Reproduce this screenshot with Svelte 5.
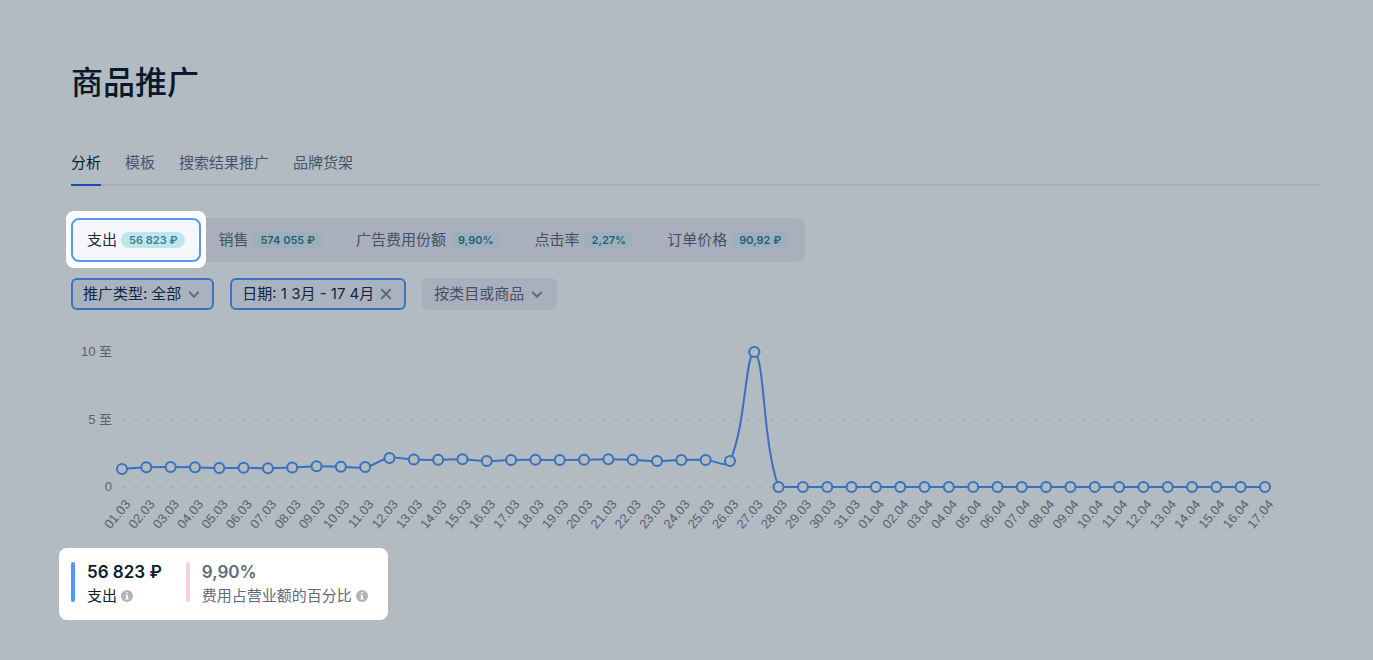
<script lang="ts">
	type Metric = {
		id: string;
		label: string;
		value: string;
	};

	type Point = { x: number; y: number };

	const tabs = ['分析', '模板', '搜索结果推广', '品牌货架'];

	const metrics: Metric[] = [
		{ id: 'spend', label: '支出', value: '56 823 ₽' },
		{ id: 'sales', label: '销售', value: '574 055 ₽' },
		{ id: 'share', label: '广告费用份额', value: '9,90%' },
		{ id: 'ctr', label: '点击率', value: '2,27%' },
		{ id: 'price', label: '订单价格', value: '90,92 ₽' }
	];

	const values = [
		1.33, 1.46, 1.48, 1.46, 1.4, 1.43, 1.38, 1.44, 1.53, 1.5, 1.48, 2.14, 2.03, 2.01, 2.05, 1.92,
		2.0, 2.01, 2.0, 2.01, 2.05, 2.01, 1.92, 2.0, 2.0, 1.92, 10, 0, 0, 0, 0, 0, 0, 0, 0, 0, 0, 0, 0,
		0, 0, 0, 0, 0, 0, 0, 0, 0
	];

	const ticks = [
		{ value: 10, label: '10 至' },
		{ value: 5, label: '5 至' },
		{ value: 0, label: '0' }
	];

	const MARCH_DAYS = 31;
	const CHART_HEIGHT = 210;
	const PLOT = { left: 51, right: 54, top: 26, bottom: 161 };
	const TENSION = 0.4;

	let activeTab = $state(0);
	let activeMetric = $state('spend');
	let chartWidth = $state(1248);

	function dayLabel(i: number) {
		const inMarch = i < MARCH_DAYS;
		const day = inMarch ? i + 1 : i + 1 - MARCH_DAYS;
		return `${String(day).padStart(2, '0')}.${inMarch ? '03' : '04'}`;
	}

	function yFor(value: number) {
		return PLOT.bottom - (value / 10) * (PLOT.bottom - PLOT.top);
	}

	function clampY(y: number) {
		return Math.min(PLOT.bottom, Math.max(PLOT.top, y));
	}

	// Control points before and after each point, kept inside the plot area
	function controls(pts: Point[], i: number) {
		const cur = pts[i];
		const prev = pts[i - 1] ?? cur;
		const next = pts[i + 1] ?? cur;
		const d01 = Math.hypot(cur.x - prev.x, cur.y - prev.y);
		const d12 = Math.hypot(next.x - cur.x, next.y - cur.y);
		const fa = (TENSION * d01) / (d01 + d12);
		const fb = (TENSION * d12) / (d01 + d12);
		return {
			before: { x: cur.x - fa * (next.x - prev.x), y: clampY(cur.y - fa * (next.y - prev.y)) },
			after: { x: cur.x + fb * (next.x - prev.x), y: clampY(cur.y + fb * (next.y - prev.y)) }
		};
	}

	function buildPath(pts: Point[]) {
		let d = `M${pts[0].x} ${pts[0].y}`;
		for (let i = 1; i < pts.length; i++) {
			const a = controls(pts, i - 1).after;
			const b = controls(pts, i).before;
			d += `C${a.x} ${a.y} ${b.x} ${b.y} ${pts[i].x} ${pts[i].y}`;
		}
		return d;
	}

	let plotRight = $derived(chartWidth - PLOT.right);
	let points = $derived(
		values.map((v, i) => ({
			x: PLOT.left + (i * (plotRight - PLOT.left)) / (values.length - 1),
			y: yFor(v)
		}))
	);
	let path = $derived(buildPath(points));
</script>

{#snippet chevron()}
	<svg class="icon" viewBox="0 0 16 16" aria-hidden="true">
		<path d="M3.8 6.5 8 10.7 12.2 6.5" />
	</svg>
{/snippet}

{#snippet info()}
	<svg class="info" viewBox="0 0 12 12" aria-hidden="true">
		<circle cx="6" cy="6" r="6" />
		<path d="M5.2 2.3h1.7v1.5H5.2zM4.4 4.9h2.5v3.5h.9v1.2H4.3V8.4h.9V6h-.8z" />
	</svg>
{/snippet}

<main>
	<h1>商品推广</h1>

	<nav class="tabs">
		{#each tabs as tab, i}
			<button class="tab" class:active={activeTab === i} onclick={() => (activeTab = i)}>
				{tab}
			</button>
		{/each}
	</nav>

	<div class="metrics">
		{#each metrics as metric}
			<button
				class="metric"
				class:active={activeMetric === metric.id}
				onclick={() => (activeMetric = metric.id)}
			>
				{metric.label}
				<span class="badge">{metric.value}</span>
			</button>
		{/each}
	</div>

	<div class="filters">
		<label class="filter selected">
			<span>推广类型:</span>
			<select>
				<option>全部</option>
			</select>
			{@render chevron()}
		</label>
		<button class="filter selected date">
			<span>日期: 1 3月 - 17 4月</span>
			<svg class="icon" viewBox="0 0 16 16" aria-hidden="true">
				<path d="M3.8 3.8 12.2 12.2M12.2 3.8 3.8 12.2" />
			</svg>
		</button>
		<label class="filter">
			<select aria-label="按类目或商品">
				<option>按类目或商品</option>
			</select>
			{@render chevron()}
		</label>
	</div>

	<div class="chart" bind:clientWidth={chartWidth}>
		<svg width={chartWidth} height={CHART_HEIGHT} role="img" aria-label="支出">
			{#each ticks as tick}
				<line class="grid" x1={PLOT.left} x2={plotRight} y1={yFor(tick.value)} y2={yFor(tick.value)} />
				<text class="tick" x={PLOT.left - 10} y={yFor(tick.value) + 4} text-anchor="end">
					{tick.label}
				</text>
			{/each}
			<path class="line" d={path} />
			{#each points as point, i}
				<circle class="dot" cx={point.x} cy={point.y} r="5" />
				<text
					class="tick"
					text-anchor="end"
					transform="translate({point.x + 6} {PLOT.bottom + 15}) rotate(-50)"
					dy="4"
				>
					{dayLabel(i)}
				</text>
			{/each}
		</svg>
	</div>

	<section class="legend">
		<div class="total spend">
			<strong>56 823 ₽</strong>
			<span>支出 {@render info()}</span>
		</div>
		<div class="total share">
			<strong>9,90%</strong>
			<span>费用占营业额的百分比 {@render info()}</span>
		</div>
	</section>
</main>

<style>
	:global(body) {
		margin: 0;
		background: #b2bac2;
	}

	main {
		padding: 63px 54px 40px 71px;
		font-family: Inter, 'Noto Sans CJK SC', sans-serif;
		font-size: 15px;
		line-height: 24px;
		color: #0b1c30;
	}

	button,
	select {
		margin: 0;
		padding: 0;
		border: none;
		background: none;
		font: inherit;
		color: inherit;
		cursor: pointer;
	}

	h1 {
		margin: 0;
		font-size: 32px;
		line-height: 40px;
		font-weight: 500;
		color: #08192d;
	}

	.tabs {
		display: flex;
		gap: 24px;
		margin-top: 48px;
		box-shadow: inset 0 -2px #a2afbb;
	}

	.tab {
		padding-bottom: 9px;
		border-bottom: 2px solid transparent;
		color: #47576a;
	}

	.tab.active {
		border-color: #1f4cb4;
		color: #0b1c30;
	}

	.metrics {
		isolation: isolate;
		display: flex;
		gap: 1px;
		width: fit-content;
		height: 44px;
		margin-top: 32px;
		border-radius: 8px;
		background: #a9afbc;
	}

	.metric {
		position: relative;
		display: flex;
		align-items: center;
		gap: 4px;
		padding: 0 16px;
		border-radius: 8px;
		white-space: nowrap;
		color: #435265;
	}

	.metric.active {
		padding: 0 14px;
		border: 2px solid #5199f1;
		background: #f5f7fb;
		color: #1b2b40;
	}

	/* white halo behind the highlighted metric */
	.metric.active::before {
		content: '';
		position: absolute;
		inset: -9px -7px -8px;
		z-index: -1;
		border-radius: 8px;
		background: #fff;
	}

	.badge {
		padding: 0 8px;
		border-radius: 8px;
		background: #9cb0ba;
		font-size: 11px;
		line-height: 16px;
		font-weight: 600;
		color: #265f7a;
	}

	.metric.active .badge {
		background: #bfe6ea;
		color: #3b7f92;
	}

	.filters {
		display: flex;
		gap: 16px;
		margin-top: 16px;
	}

	.filter {
		display: flex;
		align-items: center;
		gap: 4px;
		box-sizing: border-box;
		height: 32px;
		padding: 0 12px;
		border-radius: 6px;
		background: #a9afbc;
		white-space: nowrap;
		color: #435265;
	}

	.filter.selected {
		padding: 0 10px;
		border: 2px solid #3a74be;
		background: #a9b3bf;
		color: #14243a;
	}

	select {
		appearance: none;
		outline: none;
	}

	.icon {
		width: 16px;
		height: 16px;
		fill: none;
		stroke: #5e6c7c;
		stroke-width: 2;
		stroke-linecap: round;
		stroke-linejoin: round;
	}

	.chart {
		margin-top: 16px;
		overflow: hidden;
	}

	.chart svg {
		display: block;
	}

	.grid {
		stroke: #9ea7b0;
		stroke-width: 1;
		stroke-dasharray: 4 8;
	}

	.line {
		fill: none;
		stroke: #3872bc;
		stroke-width: 2;
	}

	.dot {
		fill: #b2bac2;
		stroke: #3872bc;
		stroke-width: 2;
	}

	.tick {
		font-family: 'Liberation Sans', 'Noto Sans CJK SC', sans-serif;
		font-size: 13px;
		fill: #566271;
	}

	.legend {
		display: flex;
		gap: 24px;
		width: fit-content;
		margin: 12px 0 0 -12px;
		padding: 12px 20px 12px 12px;
		border-radius: 8px;
		background: #fff;
	}

	.total {
		display: grid;
		grid-template-columns: 4px auto;
		column-gap: 12px;
	}

	.total::before {
		content: '';
		grid-row: 1 / 3;
		margin: 2px 0 6px;
		border-radius: 2px;
		background: #5199f1;
	}

	.total.share::before {
		background: #f7d1da;
	}

	.total strong {
		font-size: 17px;
		font-weight: 600;
	}

	.total span {
		display: flex;
		align-items: center;
		gap: 4px;
	}

	.total.share {
		color: #616b79;
	}

	.info {
		width: 12px;
		height: 12px;
		fill: #b0b4ba;
	}

	.info path {
		fill: #fff;
	}
</style>
